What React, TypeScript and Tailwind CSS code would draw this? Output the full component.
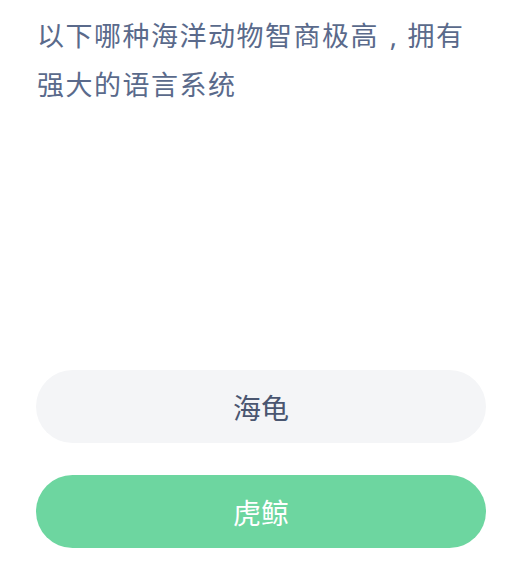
import React from "react";

export default function App() {
  return (
    <div
      className="w-[514px] h-[570px] bg-white overflow-hidden"
      style={{ fontFamily: '"Noto Sans CJK SC", "Noto Sans", sans-serif' }}
    >
      <div className="pt-[10px] pl-[37px] text-[27px] leading-[49px] tracking-[1.5px] text-[#5a6a8b]">
        以下哪种海洋动物智商极高
        <span
          className="inline-block w-[28.5px] text-center tracking-normal leading-none"
          style={{ fontFamily: '"Noto Sans", sans-serif' }}
        >
          ,
        </span>
        拥有
        <br />
        强大的语言系统
      </div>
      <div className="mt-[262px] ml-[36px] w-[450px] flex flex-col gap-[32px]">
        <div className="h-[73px] rounded-full bg-[#f4f5f7] flex items-center justify-center text-[28px] text-[#4a5670]">
          海龟
        </div>
        <div className="h-[73px] rounded-full bg-[#6dd6a0] flex items-center justify-center text-[28px] text-white">
          虎鲸
        </div>
      </div>
    </div>
  );
}
